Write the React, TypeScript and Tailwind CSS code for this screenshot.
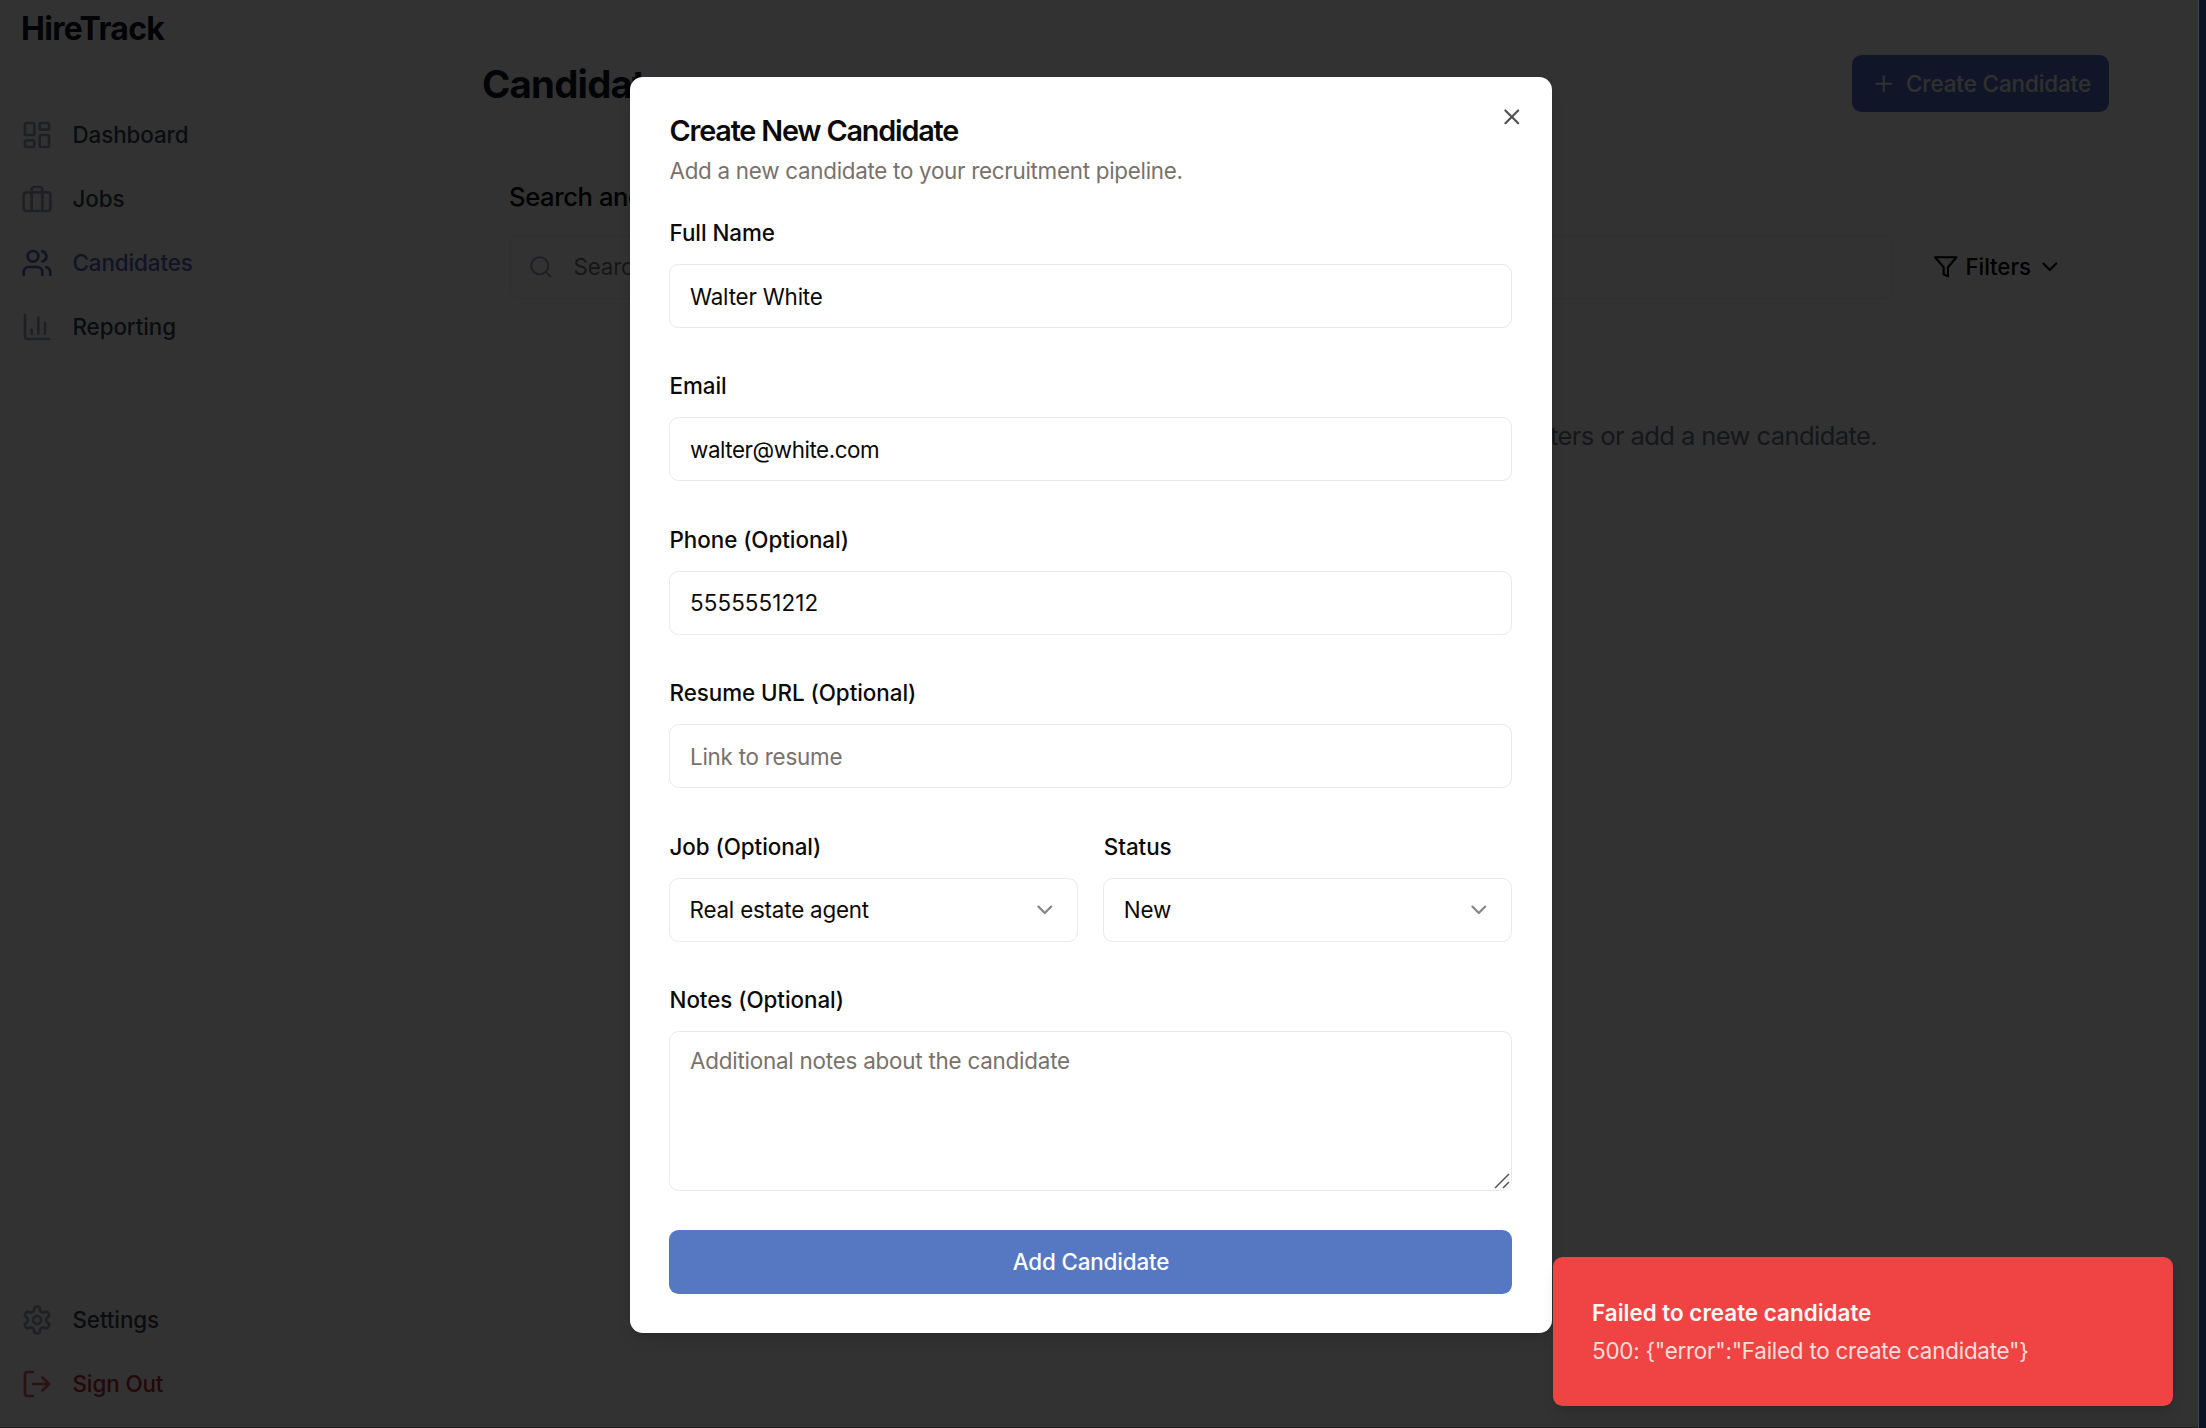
import type { ReactNode } from "react";

function Icon({ className, children }: { className: string; children: ReactNode }) {
  return (
    <svg
      viewBox="0 0 24 24"
      fill="none"
      stroke="currentColor"
      strokeWidth={2}
      strokeLinecap="round"
      strokeLinejoin="round"
      className={`shrink-0 ${className}`}
    >
      {children}
    </svg>
  );
}

const dashboard = (
  <>
    <rect width="7" height="9" x="3" y="3" rx="1" />
    <rect width="7" height="5" x="14" y="3" rx="1" />
    <rect width="7" height="9" x="14" y="12" rx="1" />
    <rect width="7" height="5" x="3" y="16" rx="1" />
  </>
);
const briefcase = (
  <>
    <rect width="20" height="14" x="2" y="7" rx="2" />
    <path d="M16 21V5a2 2 0 0 0-2-2h-4a2 2 0 0 0-2 2v16" />
  </>
);
const users = (
  <>
    <path d="M16 21v-2a4 4 0 0 0-4-4H6a4 4 0 0 0-4 4v2" />
    <circle cx="9" cy="7" r="4" />
    <path d="M22 21v-2a4 4 0 0 0-3-3.87" />
    <path d="M16 3.13a4 4 0 0 1 0 7.75" />
  </>
);
const chart = (
  <>
    <path d="M3 3v16a2 2 0 0 0 2 2h16" />
    <path d="M18 17V9" />
    <path d="M13 17V5" />
    <path d="M8 17v-3" />
  </>
);
const settings = (
  <>
    <path d="M12.22 2h-.44a2 2 0 0 0-2 2v.18a2 2 0 0 1-1 1.73l-.43.25a2 2 0 0 1-2 0l-.15-.08a2 2 0 0 0-2.73.73l-.22.38a2 2 0 0 0 .73 2.73l.15.1a2 2 0 0 1 1 1.72v.51a2 2 0 0 1-1 1.74l-.15.09a2 2 0 0 0-.73 2.73l.22.38a2 2 0 0 0 2.73.73l.15-.08a2 2 0 0 1 2 0l.43.25a2 2 0 0 1 1 1.73V20a2 2 0 0 0 2 2h.44a2 2 0 0 0 2-2v-.18a2 2 0 0 1 1-1.73l.43-.25a2 2 0 0 1 2 0l.15.08a2 2 0 0 0 2.73-.73l.22-.39a2 2 0 0 0-.73-2.73l-.15-.08a2 2 0 0 1-1-1.74v-.5a2 2 0 0 1 1-1.74l.15-.09a2 2 0 0 0 .73-2.73l-.22-.38a2 2 0 0 0-2.73-.73l-.15.08a2 2 0 0 1-2 0l-.43-.25a2 2 0 0 1-1-1.73V4a2 2 0 0 0-2-2z" />
    <circle cx="12" cy="12" r="3" />
  </>
);
const logOut = (
  <>
    <path d="M9 21H5a2 2 0 0 1-2-2V5a2 2 0 0 1 2-2h4" />
    <polyline points="16 17 21 12 16 7" />
    <line x1="21" x2="9" y1="12" y2="12" />
  </>
);
const chevron = <path d="m6 9 6 6 6-6" />;

function NavItem({ icon, label, iconClass = "text-gray-400", textClass = "text-gray-700" }: {
  icon: ReactNode; label: string; iconClass?: string; textClass?: string;
}) {
  return (
    <a className={`flex h-16 items-center gap-[19.5px] pl-[21px] text-[22.4px] font-medium tracking-[-0.1px] ${textClass}`}>
      <Icon className={`size-8 ${iconClass}`}>{icon}</Icon>
      {label}
    </a>
  );
}

function Sidebar() {
  return (
    <aside className="flex h-full w-[395px] shrink-0 flex-col border-r border-[#f3f3f3]">
      <div className="flex h-20 items-start border-b border-[#f3f3f3] pl-[21px] text-[32px] leading-[58px] font-bold tracking-[-0.7px] text-gray-900">
        HireTrack
      </div>
      <nav className="mt-[23px] flex flex-col">
        <NavItem icon={dashboard} label="Dashboard" />
        <NavItem icon={briefcase} label="Jobs" />
        <NavItem icon={users} label="Candidates" iconClass="text-[#4f66b8]" textClass="text-[#4f66b8]" />
        <NavItem icon={chart} label="Reporting" />
      </nav>
      <div className="mt-auto mb-3 flex flex-col">
        <NavItem icon={settings} label="Settings" />
        <NavItem icon={logOut} label="Sign Out" iconClass="text-[#d05a5a]" textClass="text-[#b82828]" />
      </div>
    </aside>
  );
}

function CandidatesPage() {
  return (
    <main className="flex min-w-0 flex-1 flex-col pt-[55px] pr-[89px] pl-[87px]">
      <div className="flex h-[57px] items-center justify-between">
        <h1 className="mt-px text-[38.4px] leading-[57px] font-bold tracking-[-0.8px] text-gray-900">Candidates</h1>
        <button className="flex h-[57px] items-center gap-[9px] rounded-[9.6px] bg-[#5270c4] pr-[18px] pl-[19px] text-[22.4px] font-medium tracking-[-0.09px] whitespace-nowrap text-[#eeeeee]">
          <Icon className="size-[25.6px]">
            <path d="M5 12h14" />
            <path d="M12 5v14" />
          </Icon>
          Create Candidate
        </button>
      </div>
      <section className="mt-[38px] flex flex-col px-[27px] pt-[29px]">
        <h2 className="text-[25.6px] leading-[35px] font-medium tracking-[-0.4px] text-black">Search and Filter</h2>
        <div className="mt-[21px] flex h-16 gap-5">
          <div className="flex flex-1 items-center gap-5 rounded-[9.6px] border border-[#ebebeb] pl-[18px] text-[22.4px] tracking-[-0.2px] text-stone-500">
            <Icon className="size-[25.6px] text-gray-400">
              <circle cx="11" cy="11" r="8" />
              <path d="m21 21-4.3-4.3" />
            </Icon>
            Search candidates...
          </div>
          <button className="flex items-center gap-[6.5px] rounded-[9.6px] border border-[#f3f3f3] pr-[18px] pl-[19px] text-[22.4px] font-medium tracking-[-0.1px] text-black">
            <Icon className="size-[25.6px]">
              <polygon points="22 3 2 3 10 12.46 10 19 14 21 14 12.46 22 3" />
            </Icon>
            Filters
            <Icon className="size-[25.6px]">{chevron}</Icon>
          </button>
        </div>
      </section>
      <p className="mt-[116px] pr-[232px] text-right text-[25.6px] leading-[42px] tracking-[-0.62px] whitespace-nowrap text-gray-500">
        No candidates found. Try adjusting your filters or add a new candidate.
      </p>
    </main>
  );
}

function Label({ children }: { children: ReactNode }) {
  return <label className="mb-[15px] block h-8 pl-[0.5px] text-[22.4px] leading-[32.5px] font-medium tracking-[-0.05px] text-stone-950">{children}</label>;
}

function TextField({ label, value, placeholder, tracking }: {
  label: string; value?: string; placeholder?: string; tracking?: string;
}) {
  return (
    <div className="mb-[42.4px]">
      <Label>{label}</Label>
      <div className={`flex h-16 items-center rounded-[9.6px] border-[1.6px] border-[#e9e9e9] px-5 pt-px text-[22.4px] ${tracking ?? "tracking-[-0.2px]"} ${value ? "text-stone-950" : "text-stone-500"}`}>
        {value ?? placeholder}
      </div>
    </div>
  );
}

function SelectField({ label, value }: { label: string; value: string }) {
  return (
    <div className="flex-1">
      <Label>{label}</Label>
      <div className="flex h-16 items-center justify-between rounded-[9.6px] border-[1.6px] border-[#e9e9e9] px-[19.5px] text-[22.4px] tracking-[-0.2px] text-stone-950">
        {value}
        <Icon className="size-[25.6px] opacity-50">{chevron}</Icon>
      </div>
    </div>
  );
}

function CreateDialog() {
  return (
    <div className="absolute top-[77px] left-[630px] h-[1256px] w-[922px] rounded-[12.8px] bg-white pt-[39px] pr-[40px] pl-[39px] shadow-lg">
      <Icon className="absolute top-[27px] right-[27.4px] size-[25.6px] text-[#505050]">
        <path d="M18 6 6 18" />
        <path d="m6 6 12 12" />
      </Icon>
      <h2 className="pl-[0.5px] text-[28.8px] leading-[29px] font-semibold tracking-[-1.18px] text-stone-950">Create New Candidate</h2>
      <p className="mt-[10px] mb-[30px] pl-[0.5px] text-[22.4px] leading-8 tracking-[-0.28px] text-stone-500">
        Add a new candidate to your recruitment pipeline.
      </p>
      <TextField label="Full Name" value="Walter White" />
      <TextField label="Email" value="walter@white.com" tracking="tracking-[-0.44px]" />
      <TextField label="Phone (Optional)" value="5555551212" tracking="tracking-[0.1px]" />
      <TextField label="Resume URL (Optional)" placeholder="Link to resume" tracking="tracking-[-0.24px]" />
      <div className="mb-[42px] flex gap-[25.6px]">
        <SelectField label="Job (Optional)" value="Real estate agent" />
        <SelectField label="Status" value="New" />
      </div>
      <Label>Notes (Optional)</Label>
      <div className="relative h-[160px] rounded-[9.6px] border-[1.6px] border-[#e9e9e9] px-5 pt-[13px] text-[22.4px] leading-8 tracking-[-0.22px] text-stone-500">
        Additional notes about the candidate
        <svg viewBox="0 0 16 16" className="absolute right-px bottom-px size-4" fill="none" stroke="#555" strokeWidth="1.5">
          <path d="M1 15 15 1M9 15l6-6" />
        </svg>
      </div>
      <button className="mt-[39px] flex h-16 w-full items-center justify-center rounded-[9.6px] bg-[#5677c2] pl-px text-[22.4px] font-medium tracking-[-0.16px] text-white">
        Add Candidate
      </button>
    </div>
  );
}

function Toast() {
  return (
    <div className="absolute top-[1257px] left-[1553px] h-[149px] w-[620px] rounded-[9.6px] bg-[#f04444] pt-[40px] pl-[39px] text-[22.4px] whitespace-nowrap shadow-lg">
      <p className="leading-8 font-semibold tracking-[0.02px] text-stone-50">Failed to create candidate</p>
      <p className="mt-[6px] leading-8 tracking-[-0.23px] text-stone-50/85">{'500: {"error":"Failed to create candidate"}'}</p>
    </div>
  );
}

export default function App() {
  return (
    <div className="relative flex h-[1428px] w-[2206px] overflow-hidden bg-[#0b1224] font-['Inter',sans-serif]">
      <div className="relative flex h-full w-[2199px] border-r border-[#45464c] bg-[#fafafa]">
        <Sidebar />
        <CandidatesPage />
        <div className="absolute inset-0 border-b border-black/40 bg-black/80" />
      </div>
      <CreateDialog />
      <Toast />
    </div>
  );
}
